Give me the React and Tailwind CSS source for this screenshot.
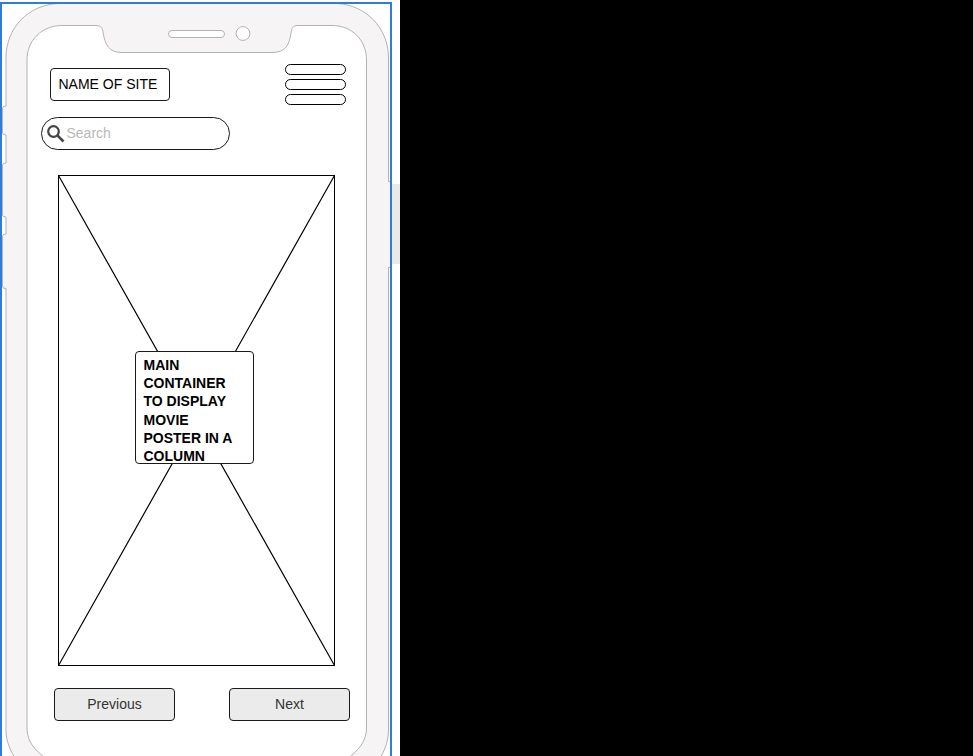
function PhoneFrame() {
  return (
    <svg className="absolute inset-0" width="400" height="756" viewBox="0 0 400 756" fill="none">
      <rect x="392" y="184" width="8" height="80" fill="#e9e9e9" />
      <path
        d="M58 3.500H337C366 5 388.500 28 388.500 58V181.500H391V267.500H388.500V730C388.500 741 385 750 379 760H16C10 750 6 741 6 730V288.500Q2.500 289 2.500 286V236Q2.500 234 6 234V217Q2.500 217 2.500 215V165Q2.500 163 6 163V135Q2.500 135 2.500 133V108Q2.500 106 6 106V58C6 28 28 5 58 3.500Z"
        fill="#f6f4f4"
        stroke="#b3b3b3"
      />
      <path
        d="M62 25.500H96C101 25.500 102.500 28 103 32C105 45 109 52.500 122 52.500H272C285 52.500 289 46 291 33C292 28 293 25.500 297 25.500H332C352 25.500 366.500 40 366.500 60V728C366.500 741 359 750 347 759H47C34 750 27 741 27 728V60C27 40 42 25.500 62 25.500Z"
        fill="#fff"
        stroke="#b3b3b3"
      />
      <rect x="168.500" y="30.500" width="56" height="7" rx="3.500" fill="#fff" stroke="#b3b3b3" />
      <circle cx="243" cy="33.500" r="6.900" fill="#fff" stroke="#b3b3b3" />
      <path d="M1 760V3H391V760" stroke="#2f7be0" strokeWidth="2" />
    </svg>
  );
}

function MenuIcon() {
  return (
    <div className="flex w-[61px] flex-col gap-1">
      <div className="h-[11px] rounded-full border border-black" />
      <div className="h-[11px] rounded-full border border-black" />
      <div className="h-[11px] rounded-full border border-black" />
    </div>
  );
}

function SearchBox() {
  return (
    <div className="mt-3 ml-[41px] flex h-[33px] w-[189px] items-center rounded-full border border-[#1a1a1a] bg-white pl-[5px]">
      <svg width="18" height="18" viewBox="0 0 18 18" fill="none" stroke="#444" className="mt-px shrink-0">
        <circle cx="6.500" cy="6.500" r="5.300" strokeWidth="2.200" />
        <path d="M10.400 10.400L16.500 16.500" strokeWidth="2.500" />
      </svg>
      <span className="ml-[1.500px] pb-[2px] text-sm text-[#b8b8b8]">Search</span>
    </div>
  );
}

function PosterPlaceholder() {
  return (
    <div className="relative mt-[25px] ml-[58px] flex h-[491px] w-[277px] items-center">
      <svg className="absolute inset-0" width="277" height="491" fill="none" stroke="#000">
        <rect x="0.500" y="0.500" width="276" height="490" />
        <path d="M0.500 0.500L276.500 490.500M276.500 0.500L0.500 490.500" strokeWidth="1.200" />
      </svg>
      <div className="relative -mt-[26px] ml-[77px] h-[113px] w-[119px] overflow-hidden rounded-[4px] border border-[#1a1a1a] bg-white pt-[4px] pl-[7.500px] text-sm leading-[18.200px] font-bold text-black">
        MAIN
        <br />
        CONTAINER
        <br />
        TO DISPLAY
        <br />
        MOVIE
        <br />
        POSTER IN A
        <br />
        COLUMN
      </div>
    </div>
  );
}

function PagerButton({ children }) {
  return (
    <button className="h-[33px] w-[121px] rounded-[4px] border border-[#1a1a1a] bg-[#ebebeb] pb-[2px] text-sm text-[#333]">
      {children}
    </button>
  );
}

export default function App() {
  return (
    <div className="flex h-[756px] w-[973px] overflow-hidden bg-black font-['Liberation_Sans',Arial,sans-serif]">
      <div className="relative h-full w-[400px] overflow-hidden bg-white">
        <PhoneFrame />
        <div className="relative flex flex-col pt-16">
          <div className="flex h-[41px] items-start justify-between pr-[54px] pl-[50px]">
            <div className="mt-1 flex h-[33px] w-[120px] items-center rounded-[4px] border border-[#1a1a1a] bg-white pb-[2px] pl-[7.500px] text-sm whitespace-nowrap text-black">
              NAME OF SITE
            </div>
            <MenuIcon />
          </div>
          <SearchBox />
          <PosterPlaceholder />
          <div className="mt-[22px] flex justify-between pr-[50px] pl-[54px]">
            <PagerButton>Previous</PagerButton>
            <PagerButton>Next</PagerButton>
          </div>
        </div>
      </div>
    </div>
  );
}
